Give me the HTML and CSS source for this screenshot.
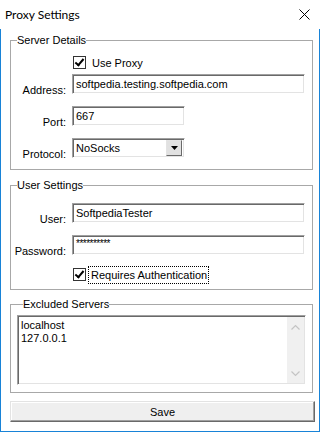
FILE: index.html
```html
<!DOCTYPE html>
<html lang="en">
<head>
    <meta charset="UTF-8">
    <title>Proxy Settings</title>
    <link rel="stylesheet" href="styles.css">
</head>
<body>
<div class="window">
    <div class="titlebar">
        <span class="title">Proxy Settings</span>
        <svg class="close" width="11" height="11" viewBox="0 0 11 11">
            <path d="M0.5 0.5 L10.5 10.5 M10.5 0.5 L0.5 10.5" stroke="#000" stroke-width="1" fill="none"/>
        </svg>
    </div>
    <div class="client">
        <fieldset class="group group-server">
            <legend>Server Details</legend>
            <div class="row row-check">
                <span class="label"></span>
                <span class="check checked"></span>
                <span class="check-text">Use Proxy</span>
            </div>
            <div class="row">
                <span class="label">Address:</span>
                <div class="field field-wide">softpedia.testing.softpedia.com</div>
            </div>
            <div class="row">
                <span class="label">Port:</span>
                <div class="field field-short">667</div>
            </div>
            <div class="row">
                <span class="label">Protocol:</span>
                <div class="field field-short select">
                    <span class="select-value">NoSocks</span>
                    <span class="drop">
                        <svg width="7" height="4" viewBox="0 0 7 4"><path d="M0 0 H7 L3.5 4 Z" fill="#000"/></svg>
                    </span>
                </div>
            </div>
        </fieldset>

        <fieldset class="group group-user">
            <legend>User Settings</legend>
            <div class="row">
                <span class="label">User:</span>
                <div class="field field-wide">SoftpediaTester</div>
            </div>
            <div class="row">
                <span class="label">Password:</span>
                <div class="field field-wide password">**********</div>
            </div>
            <div class="row row-check row-auth">
                <span class="label"></span>
                <span class="check checked"></span>
                <span class="check-text focused">Requires Authentication</span>
            </div>
        </fieldset>

        <fieldset class="group group-excluded">
            <legend>Excluded Servers</legend>
            <div class="list">
                <div class="list-text">localhost<br>127.0.0.1</div>
                <div class="scroll">
                    <svg width="9" height="6" viewBox="0 0 9 6"><path d="M0.5 5.5 L4.5 1.5 L8.5 5.5" stroke="#c4c4c4" stroke-width="1.2" fill="none"/></svg>
                    <svg width="9" height="6" viewBox="0 0 9 6"><path d="M0.5 0.5 L4.5 4.5 L8.5 0.5" stroke="#c4c4c4" stroke-width="1.2" fill="none"/></svg>
                </div>
            </div>
        </fieldset>

        <button class="save">Save</button>
    </div>
</div>
</body>
</html>
```

FILE: styles.css
```css
body {
    margin: 0;
    padding: 0;
    background: #fff;
    font-family: "Liberation Sans", Arial, sans-serif;
    font-size: 11px;
    color: #000;
}
.window {
    width: 320px;
    height: 432px;
    display: flex;
    flex-direction: column;
}
.titlebar {
    height: 30px;
    display: flex;
    align-items: center;
    justify-content: space-between;
    padding: 0 10px 0 5px;
    box-sizing: border-box;
}
.title {
    font-family: Lato, "Noto Sans", sans-serif;
    font-size: 12px;
}
.client {
    flex: 1;
    display: flex;
    flex-direction: column;
    border: 1px solid #1883d7;
    border-top: none;
    padding: 5px 4px 9px 9px;
}
.group {
    margin: 0 2px 0 0;
    padding: 0;
    border: 1px solid #a8a8a8;
    min-width: 0;
}
.group legend {
    padding: 0;
    margin-left: 6px;
    line-height: 13px;
}
.group-server {
    padding-bottom: 11px;
}
.group-user {
    margin-top: 9px;
    padding-bottom: 8px;
}
.group-excluded {
    margin-top: 8px;
    padding: 4px 6px 7px 6px;
}
.row {
    display: flex;
    height: 20px;
    margin-top: 12px;
}
.row-check {
    height: 13px;
    align-items: center;
}
.group-server .row-check {
    margin-top: 9px;
}
.group-server .row-check + .row {
    margin-top: 5px;
}
.group-user .row:first-of-type {
    margin-top: 11px;
}
.row-auth {
    margin-top: 13px;
}
.label {
    width: 55px;
    margin-right: 6px;
    text-align: right;
    align-self: flex-end;
    line-height: 13px;
    margin-bottom: -3px;
    flex-shrink: 0;
}
.row-check .label {
    margin-right: 7px;
}
.field {
    box-sizing: border-box;
    height: 20px;
    border: 1px solid;
    border-color: #a0a0a0 #fff #fff #a0a0a0;
    box-shadow: inset 1px 1px 0 #696969, inset -1px -1px 0 #e3e3e3;
    padding: 2px 3px 0 3px;
    line-height: 14px;
    white-space: nowrap;
    overflow: hidden;
}
.field-wide {
    width: 233px;
}
.field-short {
    width: 113px;
}
.password {
    font-size: 10px;
    letter-spacing: -0.5px;
    padding-top: 1px;
}
.select {
    display: flex;
    justify-content: space-between;
    padding-right: 2px;
}
.drop {
    width: 16px;
    height: 16px;
    margin-top: -1px;
    box-sizing: border-box;
    background: #e1e1e1;
    border: 1px solid;
    border-color: #e3e3e3 #696969 #696969 #e3e3e3;
    display: flex;
    align-items: center;
    justify-content: center;
}
.check {
    width: 13px;
    height: 13px;
    box-sizing: border-box;
    border: 1px solid #333;
    background: #fff;
    position: relative;
}
.check.checked::after {
    content: "";
    position: absolute;
    left: 3px;
    top: 0px;
    width: 3px;
    height: 7px;
    border: solid #000;
    border-width: 0 2px 2px 0;
    transform: rotate(40deg);
}
.check-text {
    margin-left: 6px;
    line-height: 14px;
}
.focused {
    margin-left: 3px;
    padding: 1px 1px 1px 2px;
    outline: 1px dotted #000;
}
.list {
    display: flex;
    height: 70px;
    box-sizing: border-box;
    border: 1px solid;
    border-color: #a0a0a0 #fff #fff #a0a0a0;
    box-shadow: inset 1px 1px 0 #696969, inset -1px -1px 0 #e3e3e3;
    padding: 2px 1px 1px 2px;
}
.list-text {
    flex: 1;
    padding: 1px 0 0 1px;
    line-height: 13px;
}
.scroll {
    width: 17px;
    background: #f0f0f0;
    display: flex;
    flex-direction: column;
    justify-content: space-between;
    align-items: center;
    padding: 7px 0 6px 0;
    margin-top: -1px;
}
.save {
    margin: 8px 0 0 0;
    height: 21px;
    width: 305px;
    font-family: "Liberation Sans", Arial, sans-serif;
    font-size: 11px;
    color: #000;
    background: #efefef;
    border: 1px solid;
    border-color: #e3e3e3 #696969 #696969 #e3e3e3;
    box-shadow: inset -1px -1px 0 #a0a0a0, inset 1px 1px 0 #fff;
    padding: 0;
}
```
